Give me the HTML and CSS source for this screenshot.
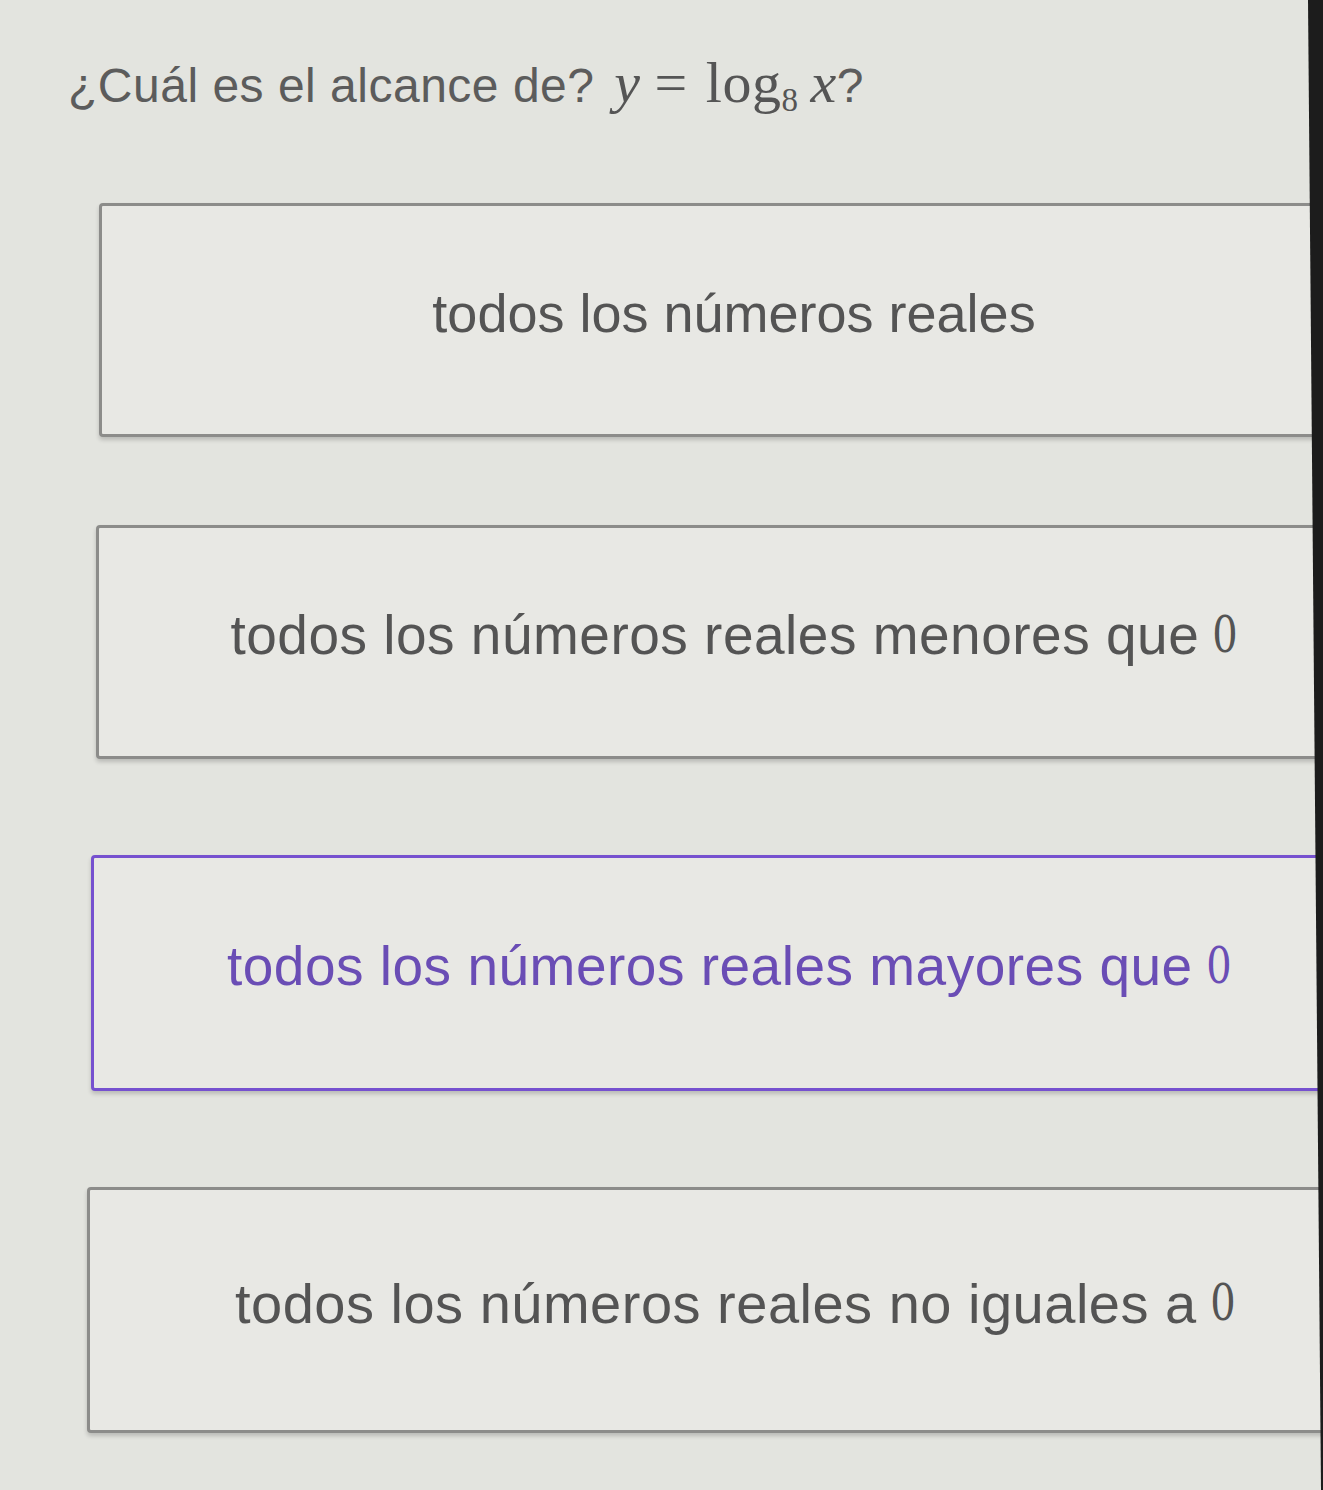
FILE: index.html
```html
<!DOCTYPE html>
<html lang="es">
<head>
<meta charset="utf-8">
<title>Pregunta</title>
<link rel="stylesheet" href="styles.css">
</head>
<body>
<div class="page">
  <h1 class="question">¿Cuál es el alcance de? <span class="math"><i>y</i><span class="eq">=</span>log<sub>8</sub><i class="x">x</i></span>?</h1>
  <div class="options">
    <div class="option opt1">todos los números reales</div>
    <div class="option opt2">todos los números reales menores que <span class="zero">0</span></div>
    <div class="option opt3 selected">todos los números reales mayores que <span class="zero">0</span></div>
    <div class="option opt4">todos los números reales no iguales a <span class="zero">0</span></div>
  </div>
</div>
<div class="edge"></div>
</body>
</html>
```
FILE: styles.css
```css
html, body {
  margin: 0;
  padding: 0;
  height: 100%;
  overflow: hidden;
}
body {
  background: #e3e4df;
  font-family: "Liberation Sans", Arial, sans-serif;
  position: relative;
}
.page {
  padding: 48px 0 0 68px;
}
.question {
  margin: 0;
  font-weight: normal;
  font-size: 48px;
  color: #5c5c5c;
  line-height: 70px;
  letter-spacing: 0.5px;
}
.math {
  font-family: "Liberation Serif", "DejaVu Serif", serif;
  font-size: 58px;
  color: #555;
  margin-left: 6px;
  letter-spacing: 0.5px;
}
.math i { font-style: italic; }
.math .eq { margin: 0 18px 0 14px; }
.math sub {
  font-size: 33px;
  vertical-align: -9px;
  margin-right: 12px;
}
.options {
  display: flex;
  flex-direction: column;
  gap: 88px;
  margin-top: 68px;
  margin-left: 31px;
}
.option {
  box-sizing: border-box;
  width: 1280px;
  height: 234px;
  padding-bottom: 14px;
  border: 3px solid #8c8c8a;
  border-radius: 4px;
  background: #e8e8e4;
  box-shadow: 0 3px 4px rgba(0,0,0,0.18);
  display: flex;
  align-items: center;
  justify-content: center;
  font-size: 55px;
  color: #545454;
  letter-spacing: 0.5px;
}
.opt1 { letter-spacing: 0; font-size: 54px; padding-right: 10px; }
.opt2 { margin-left: -3px; }
.opt3 { margin-left: -8px; height: 236px; margin-top: 8px; }
.opt4 { margin-left: -12px; height: 246px; margin-top: 8px; font-size: 56px; padding-left: 20px; }
.option.selected {
  border-color: #7651cf;
  color: #6a4db5;
}
.zero {
  font-family: "DejaVu Serif", "Liberation Serif", serif;
  font-size: 50px;
  display: inline-block;
  transform: scaleX(0.8);
  margin-left: 10px;
}
.edge {
  position: absolute;
  top: 0;
  right: 0;
  width: 18px;
  height: 100%;
  background: #1c1c1c;
  clip-path: polygon(3px 0, 100% 0, 100% 100%, 16px 100%);
}
```
